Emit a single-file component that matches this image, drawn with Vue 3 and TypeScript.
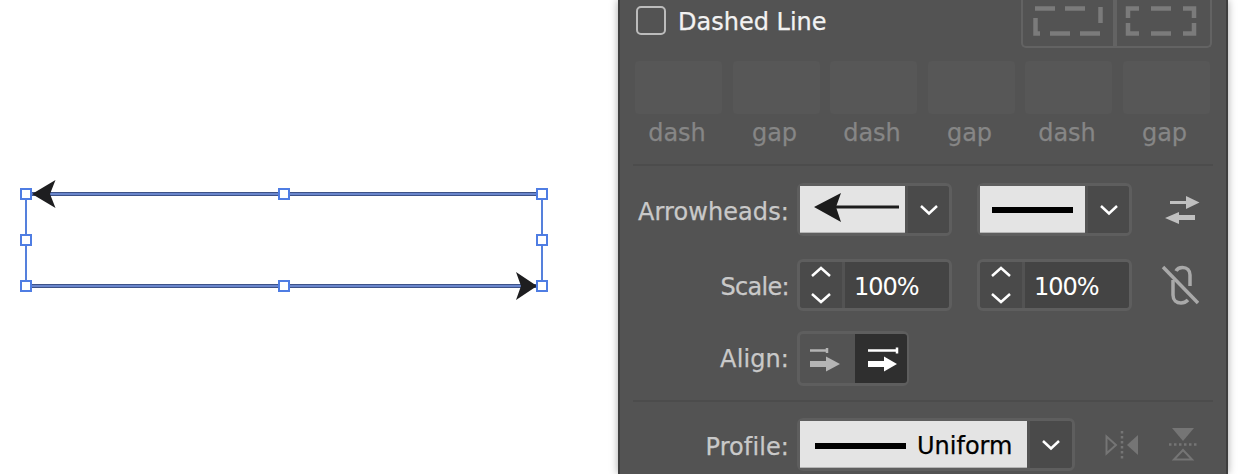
<script setup lang="ts">
const dashFields = ["dash", "gap", "dash", "gap", "dash", "gap"];

// selection handles of the bounding box on the artboard
const handles = [
    [26, 194],
    [284, 194],
    [542, 194],
    [26, 240],
    [542, 240],
    [26, 286],
    [284, 286],
    [542, 286],
];
</script>

<template>
    <div class="page">
        <!-- Artboard -->
        <svg class="artboard" width="618" height="474" viewBox="0 0 618 474">
            <path d="M26 194V286M542 194V286" class="bbox" />
            <path d="M32 194H537M26 286H537" class="stroke-dark" />
            <path d="M32 194H537M26 286H537" class="stroke-blue" />
            <path d="M32 194L55.5 180L50 194L55.5 208Z" fill="#1e1e20" />
            <path d="M537 286L516 272L521 286L516 300Z" fill="#1e1e20" />
            <rect
                v-for="h in handles"
                :key="h.join('-')"
                :x="h[0] - 5"
                :y="h[1] - 5"
                width="10"
                height="10"
                class="handle"
            />
        </svg>

        <!-- Stroke panel -->
        <div class="panel">
            <div class="dash-head">
                <span class="checkbox"></span>
                <span class="dash-title">Dashed Line</span>
                <div class="dash-modes">
                    <button class="dash-mode mode-exact" aria-label="Preserve dash lengths">
                        <svg width="90" height="40" viewBox="0 0 90 40">
                            <path d="M12 8.500H32M42 8.500H62M77.500 7V23" />
                            <path d="M12.500 18V33.500H17M27 33.500H47M57 33.500H77" />
                        </svg>
                    </button>
                    <button class="dash-mode mode-corners" aria-label="Align dashes to corners">
                        <svg width="93" height="40" viewBox="0 0 93 40">
                            <path d="M26 8.500H15V18M38 8.500H58M70 8.500H81V18" />
                            <path d="M26 33.500H15V23M38 33.500H58M70 33.500H81V23" />
                        </svg>
                    </button>
                </div>
            </div>

            <div class="dash-fields">
                <div v-for="(field, i) in dashFields" :key="i" class="dash-field">
                    <div class="dash-box"></div>
                    <span class="dash-label">{{ field }}</span>
                </div>
            </div>

            <hr class="rule rule-top" />

            <div class="row row-arrow">
                <span class="row-label">Arrowheads:</span>
                <div class="select">
                    <div class="swatch">
                        <svg width="105" height="47" viewBox="0 0 105 47">
                            <path d="M14 21L41 7L36 21L41 36Z" fill="#1c1c1c" />
                            <path d="M36 21H99" stroke="#1c1c1c" stroke-width="3" />
                        </svg>
                    </div>
                    <button class="caret" aria-label="Start arrowhead">
                        <svg width="20" height="12" viewBox="0 0 20 12"><path d="M2 2L10 9.500L18 2" /></svg>
                    </button>
                </div>
                <div class="select second">
                    <div class="swatch">
                        <svg width="105" height="47" viewBox="0 0 105 47">
                            <path d="M12 24H93" stroke="#000" stroke-width="6" />
                        </svg>
                    </div>
                    <button class="caret" aria-label="End arrowhead">
                        <svg width="20" height="12" viewBox="0 0 20 12"><path d="M2 2L10 9.500L18 2" /></svg>
                    </button>
                </div>
                <svg class="side-icon swap" width="36" height="30" viewBox="0 0 36 30" aria-label="Swap arrowheads">
                    <path d="M5 6H21V1L34.500 7.500L21 14V9H5ZM14 17V20H30V25H14V29L0 23L14 17Z" fill="#c0c0c0" />
                </svg>
            </div>

            <div class="row row-scale">
                <span class="row-label">Scale:</span>
                <div class="stepper">
                    <button class="step" aria-label="Change start scale">
                        <svg width="24" height="42" viewBox="0 0 24 42">
                            <path d="M3 12L12 4L21 12M3 30L12 38L21 30" />
                        </svg>
                    </button>
                    <span class="step-value">100%</span>
                </div>
                <div class="stepper second">
                    <button class="step" aria-label="Change end scale">
                        <svg width="24" height="42" viewBox="0 0 24 42">
                            <path d="M3 12L12 4L21 12M3 30L12 38L21 30" />
                        </svg>
                    </button>
                    <span class="step-value">100%</span>
                </div>
                <svg class="side-icon unlink" width="38" height="40" viewBox="0 0 38 40" aria-label="Link scales">
                    <path d="M2 2L37 38" />
                    <path d="M29 21V10C29 5.500 26 2.500 21.500 2.500C18.500 2.500 16 4 15 6M12 15V30C12 35 15.500 38 20 38C23 38 25 37 27 35" />
                </svg>
            </div>

            <div class="row row-align">
                <span class="row-label">Align:</span>
                <div class="align-group">
                    <button class="align-btn" aria-label="Extend arrow tip beyond end of path">
                        <svg width="52" height="49" viewBox="0 0 52 49">
                            <path d="M10 16.500H27M27 14V19" stroke="#b4b4b4" stroke-width="2.500" fill="none" />
                            <path d="M10 27H26V22.500L40 30L26 37.500V33H10Z" fill="#b4b4b4" />
                        </svg>
                    </button>
                    <button class="align-btn active" aria-label="Place arrow tip at end of path">
                        <svg width="52" height="49" viewBox="0 0 52 49">
                            <path d="M13 16.500H42M42 13.500V19.500" stroke="#fff" stroke-width="2.500" fill="none" />
                            <path d="M13 27H29V22.500L42 30L29 37.500V33H13Z" fill="#fff" />
                        </svg>
                    </button>
                </div>
            </div>

            <hr class="rule rule-bottom" />

            <div class="row row-profile">
                <span class="row-label">Profile:</span>
                <div class="select profile">
                    <div class="swatch swatch-profile">
                        <svg width="92" height="8" viewBox="0 0 92 8">
                            <path d="M0 4H91" stroke="#000" stroke-width="6" />
                        </svg>
                        <span class="profile-name">Uniform</span>
                    </div>
                    <button class="caret" aria-label="Stroke profile">
                        <svg width="20" height="12" viewBox="0 0 20 12"><path d="M2 2L10 9.500L18 2" /></svg>
                    </button>
                </div>
                <svg class="side-icon flip-x" width="34" height="30" viewBox="0 0 34 30" aria-label="Flip along">
                    <path d="M1.500 6.500L11 15L1.500 23.500Z" fill="none" stroke="#757575" stroke-width="2" />
                    <path d="M17 1V29" stroke="#757575" stroke-width="2.500" stroke-dasharray="2.500 2.500" />
                    <path d="M33 5V25L22 15Z" fill="#757575" />
                </svg>
                <svg class="side-icon flip-y" width="28" height="34" viewBox="0 0 28 34" aria-label="Flip across">
                    <path d="M3 0H25L14 13Z" fill="#757575" />
                    <path d="M0 16.500H28" stroke="#757575" stroke-width="2.500" stroke-dasharray="2.500 2.500" />
                    <path d="M14 22L23 31.500H5Z" fill="none" stroke="#757575" stroke-width="2" />
                </svg>
            </div>
        </div>
    </div>
</template>

<style scoped>
.page {
    display: flex;
    width: 1248px;
    height: 474px;
    overflow: hidden;
    background: #fff;
    font-family: "DejaVu Sans", sans-serif;
}

.artboard {
    flex: none;
    display: block;
}

.bbox {
    stroke: #5580dc;
    stroke-width: 2;
    fill: none;
}

.stroke-dark {
    stroke: #3d5288;
    stroke-width: 4;
    fill: none;
}

.stroke-blue {
    stroke: #6a86cc;
    stroke-width: 2;
    fill: none;
}

.handle {
    fill: #fff;
    stroke: #4f7de3;
    stroke-width: 2;
}

.panel {
    flex: none;
    box-sizing: border-box;
    width: 610px;
    height: 474px;
    padding: 0 15px;
    background: #535353;
    border-left: 2px solid #3e3e3e;
    border-right: 2px solid #3e3e3e;
    box-shadow: 0 0 8px rgba(0, 0, 0, 0.35);
}

button {
    padding: 0;
    border: none;
    background: none;
    display: flex;
    align-items: center;
    justify-content: center;
}

/* Dashed line */
.dash-head {
    display: flex;
    align-items: flex-start;
    height: 48px;
}

.checkbox {
    box-sizing: border-box;
    width: 30px;
    height: 29px;
    margin: 6px 12px 0 1px;
    border: 2px solid #bcbcbc;
    border-radius: 5px;
}

.dash-title {
    font-size: 24px;
    line-height: 32px;
    margin-top: 6px;
    color: #f2f2f2;
    -webkit-text-stroke: 0.25px #f2f2f2;
}

.dash-modes {
    display: flex;
    width: 191px;
    height: 48px;
    box-sizing: border-box;
    margin-left: auto;
    margin-right: -1px;
    border: 2px solid #636363;
    border-top: none;
    border-radius: 0 0 5px 5px;
}

.dash-mode {
    height: 46px;
    align-items: flex-start;
    justify-content: flex-start;
}

.mode-exact {
    flex: none;
    width: 90px;
}

.mode-corners {
    flex: 1;
    border-left: 4px solid #636363;
}

.mode-corners svg {
    margin-left: -4px;
}

.dash-mode path {
    fill: none;
    stroke: #7b7b7b;
    stroke-width: 4.500;
}

.dash-fields {
    display: grid;
    grid-template-columns: repeat(6, 87px);
    column-gap: 10.500px;
    margin-top: 13px;
}

.dash-box {
    height: 53px;
    background: #575757;
    border-radius: 4px;
}

.dash-label {
    display: block;
    margin-top: 5px;
    padding-right: 3px;
    text-align: center;
    font-size: 24px;
    line-height: 29px;
    color: #868686;
    -webkit-text-stroke: 0.25px #868686;
}

.rule {
    margin: 0 -2px;
    border: none;
    height: 2px;
    background: #4c4c4c;
}

.rule-top {
    margin-top: 16px;
}

/* Rows */
.row {
    display: flex;
    align-items: center;
}

.row-label {
    flex: none;
    width: 154px;
    margin-right: 8px;
    text-align: right;
    font-size: 24px;
    line-height: 32px;
    letter-spacing: 0.1px;
    color: #c9c9c9;
    -webkit-text-stroke: 0.25px #c9c9c9;
}

.row-arrow {
    height: 53px;
    margin-top: 17px;
}

.row-arrow .row-label {
    padding-top: 4px;
}

.select {
    flex: none;
    display: flex;
    box-sizing: border-box;
    width: 155px;
    height: 53px;
    border: 3px solid #5e5e5e;
    border-radius: 6px;
}

.second {
    margin-left: 25px;
}

.swatch {
    flex: none;
    width: 105px;
    height: 47px;
    background: #e4e4e4;
    box-shadow: inset 0 -1px 0 #b5b5b5;
}

.swatch svg {
    display: block;
}

.caret {
    flex: 1;
    margin-left: 3px;
    background: #4a4a4a;
    border-radius: 0 3px 3px 0;
}

.caret path {
    fill: none;
    stroke: #fff;
    stroke-width: 2.500;
}

.side-icon {
    flex: none;
}

.swap {
    margin-left: 33px;
}

.row-scale {
    height: 52px;
    margin-top: 23px;
}

.row-scale .row-label {
    padding-top: 4px;
    letter-spacing: -0.7px;
}

.stepper {
    flex: none;
    display: flex;
    box-sizing: border-box;
    width: 155px;
    height: 52px;
    border: 3px solid #5e5e5e;
    border-radius: 6px;
}

.step {
    flex: none;
    width: 42px;
    background: #4a4a4a;
    border-radius: 3px 0 0 3px;
}

.step path {
    fill: none;
    stroke: #fff;
    stroke-width: 2.500;
}

.step-value {
    flex: 1;
    margin-left: 3px;
    padding: 2px 0 0 9px;
    font-size: 24px;
    line-height: 46px;
    letter-spacing: -1px;
    color: #fff;
    background: #444;
    border-radius: 0 3px 3px 0;
}

.unlink {
    margin-left: 29px;
}

.unlink path {
    fill: none;
    stroke: #a9a9a9;
    stroke-width: 3.500;
}

.row-align {
    height: 55px;
    margin-top: 20px;
}

.align-group {
    flex: none;
    display: flex;
    box-sizing: border-box;
    width: 112px;
    height: 55px;
    border: 3px solid #5e5e5e;
    border-radius: 6px;
}

.align-btn {
    flex: none;
    width: 52px;
    height: 49px;
}

.align-btn + .align-btn {
    margin-left: 3px;
}

.align-btn.active {
    background: #2f2f2f;
    border-radius: 0 3px 3px 0;
}

.rule-bottom {
    margin-top: 14px;
}

.row-profile {
    height: 53px;
    margin-top: 16px;
}

.row-profile .row-label {
    padding-top: 4px;
}

.profile {
    width: 278px;
}

.swatch-profile {
    display: flex;
    align-items: center;
    width: 227px;
    padding: 3px 0 0 15px;
    box-sizing: border-box;
}

.profile-name {
    margin-left: 10px;
    font-size: 24px;
    line-height: 44px;
    color: #000;
    -webkit-text-stroke: 0.25px #000;
}

.flip-x {
    margin-left: 30px;
}

.flip-y {
    margin-left: 30px;
}
</style>

<style>
html,
body {
    margin: 0;
    background: #fff;
}
</style>
